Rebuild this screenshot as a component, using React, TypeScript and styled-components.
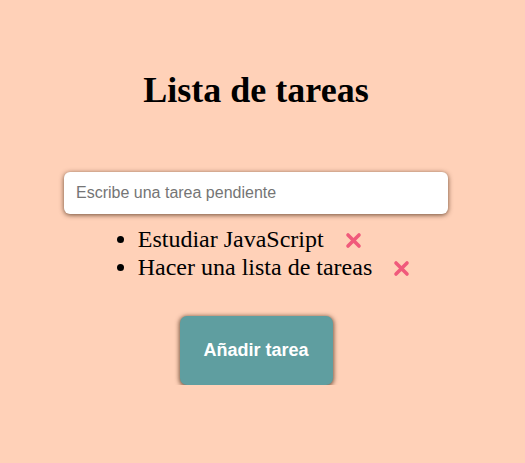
import React, { useState } from "react";
import styled, { createGlobalStyle } from "styled-components";

const Global = createGlobalStyle`
  html, body { margin: 0; padding: 0; background: #ffd1b8; }
  body { font-family: "Liberation Serif", "Times New Roman", serif; }
`;

const Page = styled.div`
  width: 512px;
  display: flex;
  flex-direction: column;
  align-items: center;
  padding-top: 70px;
`;

const Title = styled.h1`
  margin: 0;
  font-size: 36px;
  font-weight: bold;
  line-height: 41px;
`;

const Input = styled.input`
  margin-top: 61px;
  box-sizing: border-box;
  width: 384px;
  height: 42px;
  padding: 0 12px;
  border: none;
  border-radius: 6px;
  background: #fff;
  box-shadow: 0 1px 5px rgba(60, 30, 10, 0.75);
  font-family: "Liberation Sans", Arial, sans-serif;
  font-size: 16px;
  outline: none;
  &::placeholder { color: #757575; }
`;

const List = styled.ul`
  margin: 11px 0 0;
  padding: 0 4px 0 40px;
  font-size: 24px;
`;

const Item = styled.li`
  line-height: 28px;
  height: 28px;
`;

const Remove = styled.button`
  display: inline-flex;
  vertical-align: -2px;
  margin-left: 21px;
  padding: 0;
  border: none;
  background: none;
  cursor: pointer;
`;

const AddButton = styled.button`
  margin-top: 35px;
  width: 153px;
  height: 69px;
  border: none;
  border-radius: 7px;
  background: #5f9ea0;
  color: #fff;
  font-family: "Liberation Sans", Arial, sans-serif;
  font-weight: bold;
  font-size: 18px;
  box-shadow: 0 1px 4px 1px rgba(70, 40, 20, 0.7);
  cursor: pointer;
`;

const XIcon = () => (
  <svg width="17" height="17" viewBox="0 0 17 17">
    <path d="M3 3 L14 14 M14 3 L3 14" stroke="#f05a7b" strokeWidth="3.6" strokeLinecap="round" />
  </svg>
);

export default function App() {
  const [tasks] = useState(["Estudiar JavaScript", "Hacer una lista de tareas"]);
  return (
    <>
      <Global />
      <Page>
        <Title>Lista de tareas</Title>
        <Input placeholder="Escribe una tarea pendiente" />
        <List>
          {tasks.map((t) => (
            <Item key={t}>
              {t}
              <Remove aria-label="Eliminar"><XIcon /></Remove>
            </Item>
          ))}
        </List>
        <AddButton>Añadir tarea</AddButton>
      </Page>
    </>
  );
}
